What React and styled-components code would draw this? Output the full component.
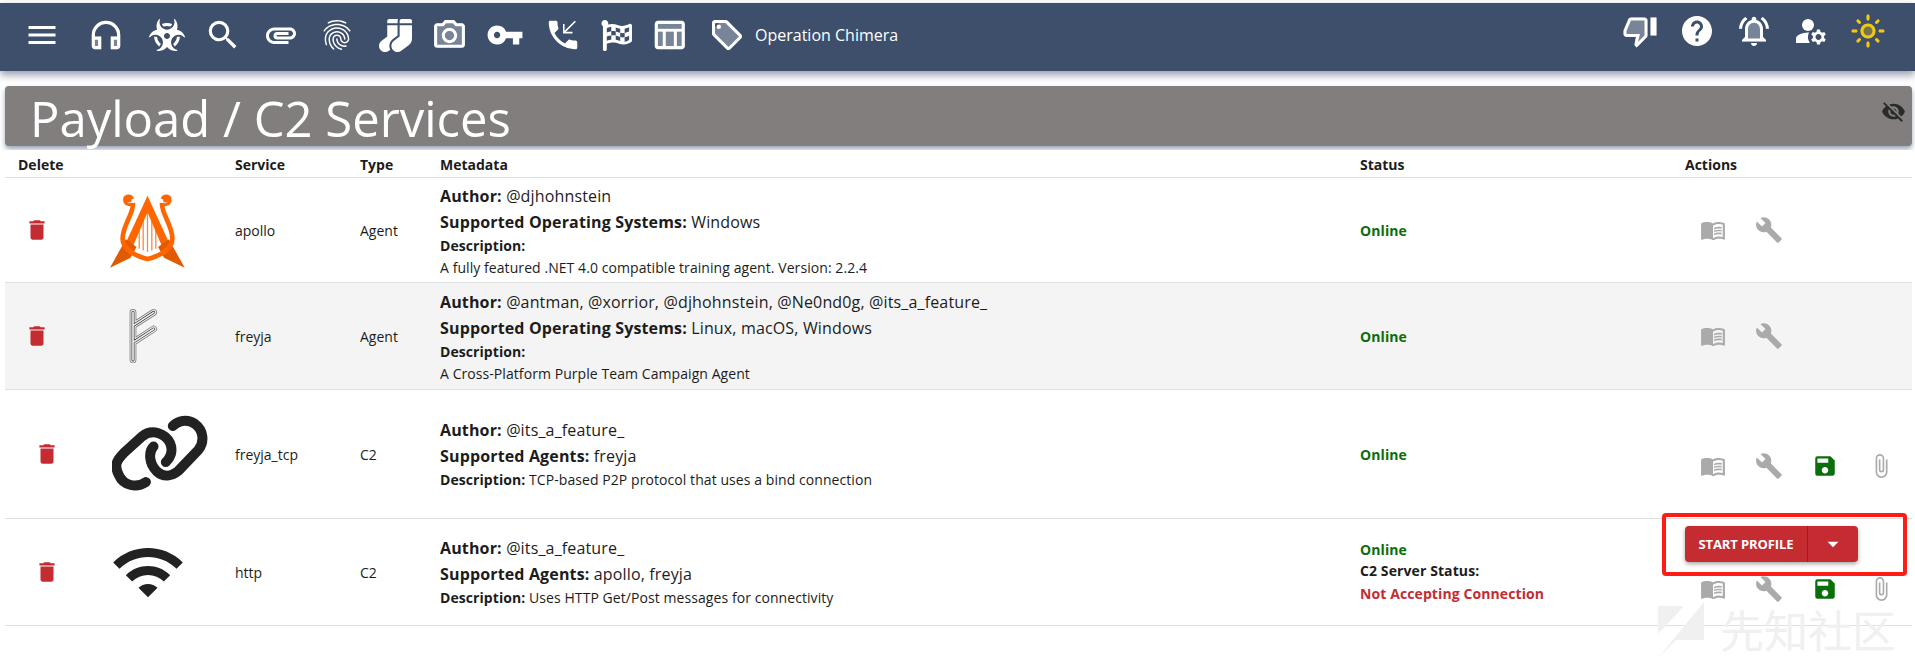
import React from 'react'
import styled, { createGlobalStyle } from 'styled-components'
import { FaBiohazard, FaFlagCheckered, FaSocks } from 'react-icons/fa'
import {
  MdArrowDropDown, MdAttachFile, MdAttachment, MdBuild, MdDelete, MdFingerprint, MdHeadphones, MdHelp, MdLightMode,
  MdLocalOffer, MdManageAccounts, MdMenu, MdMenuBook, MdNotificationsActive, MdOutlineHeadphones, MdOutlineLightMode,
  MdOutlineLocalOffer, MdOutlineNotificationsActive, MdOutlinePhotoCamera, MdOutlineTableChart, MdOutlineThumbDown,
  MdPhoneCallback, MdPhotoCamera, MdSave, MdSearch, MdTableChart, MdThumbDown, MdVisibilityOff, MdVpnKey, MdWifi
} from 'react-icons/md'

const font = `'Open Sans', 'Noto Sans', sans-serif`

const Global = createGlobalStyle`
  html, body { margin: 0; background: white; overflow: hidden; }
  body { font-family: ${font}; color: #1c1c1c; }
`

const Page = styled.div`
  height: 660px;
  overflow: hidden;
  padding-top: 3px;
  position: relative;
  width: 1915px;
`

const Bar = styled.header`
  align-items: flex-start;
  background: #3d4f6b;
  box-shadow: 0 4px 8px rgba(61, 79, 107, 0.55);
  display: flex;
  height: 68px;
  padding: 0 21px 0 16px;
`

const BarGroup = styled.div`
  align-items: center;
  display: flex;
  margin-left: ${({ $push }) => ($push ? 'auto' : '0')};
  padding-top: ${({ $top }) => $top}px;
`

const BarIcon = styled.span`
  align-items: center;
  color: ${({ $color }) => $color || 'white'};
  display: flex;
  height: 40px;
  justify-content: center;
  margin-left: ${({ $gap }) => $gap || 0}px;
  position: relative;
  width: 52px;
  svg { font-size: ${({ $size }) => $size || 36}px; }
`

const Under = styled.span`
  display: flex;
  opacity: 0.3;
  position: absolute;
`

const OpName = styled.span`
  color: white;
  font-size: 16px;
  margin-left: 2px;
`

const TitleBar = styled.div`
  align-items: center;
  background: #827e7e;
  border-radius: 4px;
  box-shadow: 0 3px 5px rgba(70, 90, 130, 0.55);
  box-sizing: border-box;
  color: white;
  display: flex;
  font-size: 49px;
  height: 60px;
  justify-content: space-between;
  line-height: 60px;
  margin: 15px 3px 0 5px;
  padding: 4px 6px 0 25px;
  svg { color: #2a2a2a; font-size: 25px; margin-top: -14px; }
`

const Table = styled.div`
  margin: 4px 3px 0 5px;
`

const Row = styled.div`
  align-items: center;
  background: ${({ $shade }) => ($shade ? '#f4f4f4' : 'white')};
  border-bottom: 1px solid #e0e0e0;
  box-sizing: border-box;
  display: grid;
  font-size: 14px;
  grid-template-columns: 85px 145px 125px 80px 920px 325px 1fr;
  height: ${({ $h }) => $h}px;
`

const Head = styled.div`
  font-size: 14px;
  font-weight: 700;
  padding: 1px 0 0 ${({ $inset }) => $inset || 0}px;
`

const Bin = styled.div`
  color: #c42c32;
  display: flex;
  padding-left: ${({ $inset }) => $inset}px;
  svg { font-size: 26px; }
`

const Logo = styled.div`
  align-items: center;
  color: #222;
  display: flex;
  padding-left: ${({ $inset }) => $inset}px;
`

const Meta = styled.div`
  display: flex;
  flex-direction: column;
`

const Line = styled.div`
  font-size: ${({ $small }) => ($small ? 14 : 16)}px;
  letter-spacing: ${({ $small }) => ($small ? 0.07 : 0.15)}px;
  line-height: ${({ $lh }) => $lh}px;
  white-space: nowrap;
  b { font-weight: 700; }
`

const Status = styled.div`
  color: ${({ $color }) => $color || '#1c1c1c'};
  font-size: 14px;
  font-weight: 700;
  letter-spacing: 0.1px;
  line-height: ${({ $lh }) => $lh || 21}px;
`

const Actions = styled.div`
  align-self: start;
  display: flex;
  flex-direction: column;
  padding-top: ${({ $top }) => $top}px;
`

const ActionRow = styled.div`
  display: flex;
`

const Action = styled.span`
  align-items: center;
  color: ${({ $color }) => $color || '#aaa'};
  display: flex;
  height: 28px;
  justify-content: center;
  width: 56px;
  svg { font-size: ${({ $size }) => $size || 26}px; }
`

const Split = styled.div`
  background: #c42c32;
  border-radius: 4px;
  box-shadow: 0 2px 4px rgba(0, 0, 0, 0.35);
  color: white;
  display: flex;
  height: 36px;
  margin-bottom: 13px;
  width: 173px;
`

const SplitMain = styled.span`
  align-items: center;
  border-right: 1px solid #9b1f24;
  display: flex;
  font-size: 13px;
  font-weight: 700;
  justify-content: center;
  letter-spacing: -0.1px;
  width: 122px;
`

const SplitArrow = styled.span`
  align-items: center;
  display: flex;
  flex: 1;
  justify-content: center;
  svg { font-size: 26px; }
`

const Callout = styled.div`
  border: 4px solid #ff1c14;
  border-radius: 4px;
  box-sizing: border-box;
  height: 63px;
  left: 1662px;
  position: absolute;
  top: 513px;
  width: 245px;
`

const Watermark = styled.div`
  align-items: center;
  color: #f0f0f0;
  display: flex;
  font-family: 'Noto Sans CJK SC', sans-serif;
  font-size: 44px;
  gap: 16px;
  left: 1658px;
  line-height: 56px;
  position: absolute;
  top: 600px;
  white-space: nowrap;
`

const Apollo = () => (
  <svg width="75" height="75" viewBox="90 72 226 226">
    <path stroke="#f98a4a" strokeWidth="4" d="M178 165v75M190 140v105M203 120v130M216 140v105M228 165v75" />
    <path fill="#ff6600" d="M203 80L134 230l18 20 51-120 51 120 18-20z" />
    <path fill="#e25a00" d="M90 297l48-86 32 24-18 32zM315 297l-48-86-32 24 18 32z" />
    <path
      fill="none"
      stroke="#ff6600"
      strokeWidth="14"
      d="M159 102c4 30-31 66-31 108 0 30 37 52 75 61 38-9 75-31 75-61 0-42-35-78-31-108"
    />
    <path
      fill="none"
      stroke="#ff6600"
      strokeWidth="9"
      d="M158 104c-8 8-24 1-24-12 0-14 20-14 24-2M247 104c8 8 24 1 24-12 0-14-20-14-24-2"
    />
    <circle cx="146" cy="92" r="9" fill="#ff6600" />
    <circle cx="259" cy="92" r="9" fill="#ff6600" />
  </svg>
)

const Freyja = () => (
  <svg width="30" height="54" viewBox="88 58 90 162" fill="none" strokeLinejoin="round">
    {[['#777', 20], ['#f4f4f4', 15.5], ['#333', 9], ['#eee', 5]].map(([c, w]) => (
      <path key={w} stroke={c} strokeWidth={w} strokeLinecap="round" d="M100 68v143M100 108l62-40M100 158l62-40" />
    ))}
  </svg>
)

const Chain = () => (
  <svg width="98" height="78" viewBox="335 70 295 235" fill="none" stroke="#222" strokeWidth="30" strokeLinecap="round">
    <path d="M437 272c-27 18-67 13-82-22-15-30-5-45 15-65l55-50c30-25 70-10 85 20 10 25 0 45-13 57" />
    <path d="M460 165c-15 15-15 50 10 75 20 18 45 15 65-2l60-63c20-25 15-60-10-78-25-17-50-9-67 6" />
  </svg>
)

const navIcons = [
  { Icon: MdMenu },
  { Icon: MdOutlineHeadphones, Fill: MdHeadphones, $gap: 12, $size: 38 },
  { Icon: FaBiohazard, $gap: 9, $size: 36 },
  { Icon: MdSearch, $gap: 4, $size: 38 },
  { Icon: MdAttachment, $gap: 6 },
  { Icon: MdFingerprint, $gap: 4 },
  { Icon: FaSocks, $gap: 6, $size: 33 },
  { Icon: MdOutlinePhotoCamera, Fill: MdPhotoCamera, $gap: 2, $size: 37 },
  { Icon: MdVpnKey, $gap: 4, $size: 38 },
  { Icon: MdPhoneCallback, $gap: 6, $size: 38 },
  { Icon: FaFlagCheckered, $gap: 1, $size: 31 },
  { Icon: MdOutlineTableChart, Fill: MdTableChart, $gap: 1, $size: 38 },
  { Icon: MdOutlineLocalOffer, Fill: MdLocalOffer, $gap: 6 }
]

const rightIcons = [
  { Icon: MdOutlineThumbDown, Fill: MdThumbDown, $gap: 5 },
  { Icon: MdHelp, $gap: 5 },
  { Icon: MdOutlineNotificationsActive, Fill: MdNotificationsActive, $gap: 5 },
  { Icon: MdManageAccounts, $gap: 5 },
  { Icon: MdOutlineLightMode, Fill: MdLightMode, $color: '#f2c811', $gap: 5 }
]

const services = [
  {
    name: 'apollo', type: 'Agent', h: 105, bin: 0, logo: <Apollo />, logoInset: 20, top: 38,
    meta: [['Author:', '@djhohnstein'], ['Supported Operating Systems:', 'Windows']],
    description: 'A fully featured .NET 4.0 compatible training agent. Version: 2.2.4'
  },
  {
    name: 'freyja', type: 'Agent', h: 107, bin: 0, logo: <Freyja />, logoInset: 39, top: 39, shade: true,
    meta: [['Author:', '@antman, @xorrior, @djhohnstein, @Ne0nd0g, @its_a_feature_'], ['Supported Operating Systems:', 'Linux, macOS, Windows']],
    description: 'A Cross-Platform Purple Team Campaign Agent'
  },
  {
    name: 'freyja_tcp', type: 'C2', h: 129, bin: 10, logo: <Chain />, logoInset: 22, top: 62, profile: true,
    meta: [['Author:', '@its_a_feature_'], ['Supported Agents:', 'freyja']],
    inline: 'TCP-based P2P protocol that uses a bind connection'
  },
  {
    name: 'http', type: 'C2', h: 107, bin: 10, logo: <MdWifi size={76} />, logoInset: 20, top: 7, profile: true, running: true,
    meta: [['Author:', '@its_a_feature_'], ['Supported Agents:', 'apollo, freyja']],
    inline: 'Uses HTTP Get/Post messages for connectivity'
  }
]

const NavIcon = ({ Icon, Fill, ...props }) => (
  <BarIcon {...props}>
    {Fill && <Under><Fill /></Under>}
    <Icon />
  </BarIcon>
)

const App = () => (
  <Page>
    <Global />
    <Bar>
      <BarGroup $top={12}>
        {navIcons.map((item, i) => <NavIcon key={i} {...item} />)}
        <OpName>Operation Chimera</OpName>
      </BarGroup>
      <BarGroup $push $top={8}>
        {rightIcons.map((item, i) => <NavIcon key={i} {...item} />)}
      </BarGroup>
    </Bar>
    <TitleBar>
      Payload / C2 Services
      <MdVisibilityOff />
    </TitleBar>
    <Table>
      <Row $h={28}>
        <Head $inset={13}>Delete</Head>
        <span />
        <Head>Service</Head>
        <Head>Type</Head>
        <Head>Metadata</Head>
        <Head>Status</Head>
        <Head>Actions</Head>
      </Row>
      {services.map(s => (
        <Row key={s.name} $h={s.h} $shade={s.shade}>
          <Bin $inset={s.bin + 19}><MdDelete /></Bin>
          <Logo $inset={s.logoInset}>{s.logo}</Logo>
          <span>{s.name}</span>
          <span>{s.type}</span>
          <Meta>
            {s.meta.map(([k, v]) => (
              <Line key={k} $lh={26}><b>{k}</b> {v}</Line>
            ))}
            {s.inline
              ? <Line $small $lh={22}><b>Description:</b> {s.inline}</Line>
              : (
                <>
                  <Line $small $lh={22}><b>Description:</b></Line>
                  <Line $small $lh={21}>{s.description}</Line>
                </>
              )}
          </Meta>
          <div>
            <Status $color="#0a6e0a">Online</Status>
            {s.running && (
              <>
                <Status $lh={22}>C2 Server Status:</Status>
                <Status $color="#c42c32" $lh={24}>Not Accepting Connection</Status>
              </>
            )}
          </div>
          <Actions $top={s.top}>
            {s.running && (
              <Split>
                <SplitMain>START PROFILE</SplitMain>
                <SplitArrow><MdArrowDropDown /></SplitArrow>
              </Split>
            )}
            <ActionRow>
              <Action><MdMenuBook /></Action>
              <Action $size={28}><MdBuild /></Action>
              {s.profile && <Action $color="#0a6e0a"><MdSave /></Action>}
              {s.profile && <Action><MdAttachFile /></Action>}
            </ActionRow>
          </Actions>
        </Row>
      ))}
    </Table>
    <Callout />
    <Watermark>
      <svg width="46" height="58" viewBox="0 0 46 58">
        <path fill="#f0f0f0" d="M0 6h26L0 34zM46 2v38H18L0 58z" />
      </svg>
      先知社区
    </Watermark>
  </Page>
)

export default App
